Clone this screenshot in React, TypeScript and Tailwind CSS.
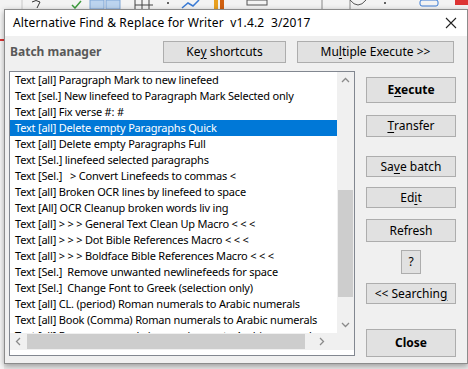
import React from "react";

const FONT = { fontFamily: '"Noto Sans", "Segoe UI", sans-serif' };

const rows = [
  "Text [all] Paragraph Mark to new linefeed",
  "Text [sel.] New linefeed to Paragraph Mark Selected only",
  "Text [all] Fix verse #: #",
  "Text [all] Delete empty Paragraphs Quick",
  "Text [all] Delete empty Paragraphs Full",
  "Text [Sel.] linefeed selected paragraphs",
  "Text [Sel.]   > Convert Linefeeds to commas <",
  "Text [all] Broken OCR lines by linefeed to space",
  "Text [All] OCR Cleanup broken words liv ing",
  "Text [all] > > > General Text Clean Up Macro < < <",
  "Text [all] > > > Dot Bible References Macro < < <",
  "Text [all] > > > Boldface Bible References Macro < < <",
  "Text [Sel.]  Remove unwanted newlinefeeds for space",
  "Text [Sel.]  Change Font to Greek (selection only)",
  "Text [all] CL. (period) Roman numerals to Arabic numerals",
  "Text [all] Book (Comma) Roman numerals to Arabic numerals",
  "Text [all] Roman numerals (comma) verse to Arabic numerals",
];

const Btn = ({ className = "", children }: { className?: string; children: React.ReactNode }) => (
  <div
    className={`flex items-center justify-center border border-[#adadad] bg-[#e1e1e1] text-[12px] text-black ${className}`}
  >
    {children}
  </div>
);

const U = ({ children }: { children: React.ReactNode }) => (
  <span className="underline underline-offset-2">{children}</span>
);

const Chevron = ({ d }: { d: string }) => (
  <svg width="9" height="9" viewBox="0 0 9 9">
    <path d={d} fill="none" stroke="#8a8a8a" strokeWidth="1.3" />
  </svg>
);

export default function App() {
  return (
    <div className="w-[468px] h-[369px] overflow-hidden bg-[#e9e9e9] flex flex-col" style={FONT}>
      {/* writer toolbar behind the dialog */}
      <svg width="468" height="9" className="shrink-0 bg-[#f3f3f3]">
        <line x1="22" y1="0" x2="22" y2="9" stroke="#c8c8c8" />
        <path d="M32 2 q4 -3 8 0 l-3 6" fill="none" stroke="#333" />
        <path d="M72 5 l3 3 l6 -7" fill="none" stroke="#3c9a3c" strokeWidth="1.5" />
        <rect x="90" y="0" width="14" height="9" fill="#bcd4ee" stroke="#7ea6d6" />
        <rect x="106" y="0" width="14" height="9" fill="#bcd4ee" stroke="#7ea6d6" />
        <path d="M135 0 v9 M142 0 v9 M149 0 v9 M135 5 h18" stroke="#444" />
        <circle cx="168" cy="3" r="1" fill="#333" />
        <path d="M182 8 l6 -5 l5 3 l6 -6" fill="none" stroke="#3a7bd5" strokeWidth="1.5" />
        <rect x="214" y="0" width="4" height="9" fill="#e8a020" />
        <rect x="220" y="0" width="4" height="9" fill="#d06010" />
        <rect x="247" y="0" width="20" height="5" fill="none" stroke="#555" />
        <path d="M322 0 v9 M350 0 v9" stroke="#888" />
        <path d="M350 0 q8 10 16 0" fill="none" stroke="#555" />
        <circle cx="385" cy="3" r="1" fill="#333" />
        <rect x="420" y="0" width="18" height="6" rx="2" fill="none" stroke="#3a7bd5" />
        <rect x="455" y="0" width="13" height="5" fill="#d33" />
      </svg>

      <div className="flex flex-1 min-h-0">
        <div className="w-[4px] shrink-0 bg-[#f7f7f7] flex flex-col">
          <div className="mt-[30px] h-[2px] bg-[#d33]" />
        </div>

        {/* dialog window */}
        <div className="w-[464px] h-[355px] shrink-0 border border-[#8c8c8c] bg-[#f0f0f0] flex flex-col shadow-[0_2px_6px_rgba(0,0,0,0.35)]">
          <div className="h-[26px] shrink-0 bg-white flex items-center pl-[8px] pr-[10px]">
            <span className="text-[12px] tracking-[0.15px] text-black whitespace-pre flex-1">
              Alternative Find &amp; Replace for Writer  v1.4.2  3/2017
            </span>
            <svg width="12" height="12" viewBox="0 0 12 12">
              <path d="M1 1 L11 11 M11 1 L1 11" stroke="#222" strokeWidth="1.1" />
            </svg>
          </div>

          <div className="flex items-center pt-[5px] pl-[5px] h-[27px] shrink-0">
            <span className="w-[153px] text-[12px] font-bold text-[#595959]">Batch manager</span>
            <Btn className="w-[123px] h-[22px]">
              Ke<U>y</U>&nbsp;shortcuts
            </Btn>
            <Btn className="w-[157px] h-[22px] ml-[11px]">
              Mu<U>l</U>tiple Execute &gt;&gt;
            </Btn>
          </div>

          <div className="flex mt-[8px] pl-[4px]">
            {/* list box */}
            <div className="w-[346px] h-[285px] border border-[#828790] bg-white flex flex-col">
              <div className="flex h-[261px]">
                <div className="flex-1 overflow-hidden">
                  {rows.map((r, i) => (
                    <div
                      key={i}
                      className={`h-[16px] leading-[16px] pl-[5px] text-[11px] tracking-[-0.2px] whitespace-pre ${
                        i === 3 ? "bg-[#0078d7] text-white" : "text-black"
                      }`}
                    >
                      {r}
                    </div>
                  ))}
                </div>
                <div className="w-[17px] bg-[#f0f0f0] flex flex-col items-center">
                  <div className="h-[17px] flex items-center justify-center">
                    <Chevron d="M1 6 L4.5 2.5 L8 6" />
                  </div>
                  <div className="mt-[101px] w-[15px] h-[107px] bg-[#cdcdcd]" />
                  <div className="mt-auto h-[17px] flex items-center justify-center">
                    <Chevron d="M1 3 L4.5 6.5 L8 3" />
                  </div>
                </div>
              </div>
              <div className="flex h-[17px] bg-[#f0f0f0]">
                <div className="w-[17px] flex items-center justify-center">
                  <Chevron d="M6 1 L2.5 4.5 L6 8" />
                </div>
                <div className="w-[278px] my-[1px] bg-[#cdcdcd]" />
                <div className="flex-1 flex items-center justify-center">
                  <Chevron d="M3 1 L6.5 4.5 L3 8" />
                </div>
                <div className="w-[17px]" />
              </div>
            </div>

            {/* right column */}
            <div className="ml-[11px] w-[90px] flex flex-col items-center">
              <Btn className="w-[90px] h-[26px] mt-[6px] font-bold">
                E<U>x</U>ecute
              </Btn>
              <Btn className="w-[90px] h-[22px] mt-[12px]">
                <U>T</U>ransfer
              </Btn>
              <Btn className="w-[90px] h-[21px] mt-[19px]">
                Sa<U>v</U>e batch
              </Btn>
              <Btn className="w-[90px] h-[21px] mt-[10px]">
                Ed<U>i</U>t
              </Btn>
              <Btn className="w-[90px] h-[23px] mt-[11px]">Refresh</Btn>
              <Btn className="w-[20px] h-[24px] mt-[8px]">?</Btn>
              <Btn className="w-[90px] h-[21px] mt-[9px]">
                &lt;&lt; Searchin<U>g</U>
              </Btn>
              <Btn className="w-[90px] h-[28px] mt-[25px] font-bold">Close</Btn>
            </div>
          </div>
        </div>
      </div>
    </div>
  );
}
